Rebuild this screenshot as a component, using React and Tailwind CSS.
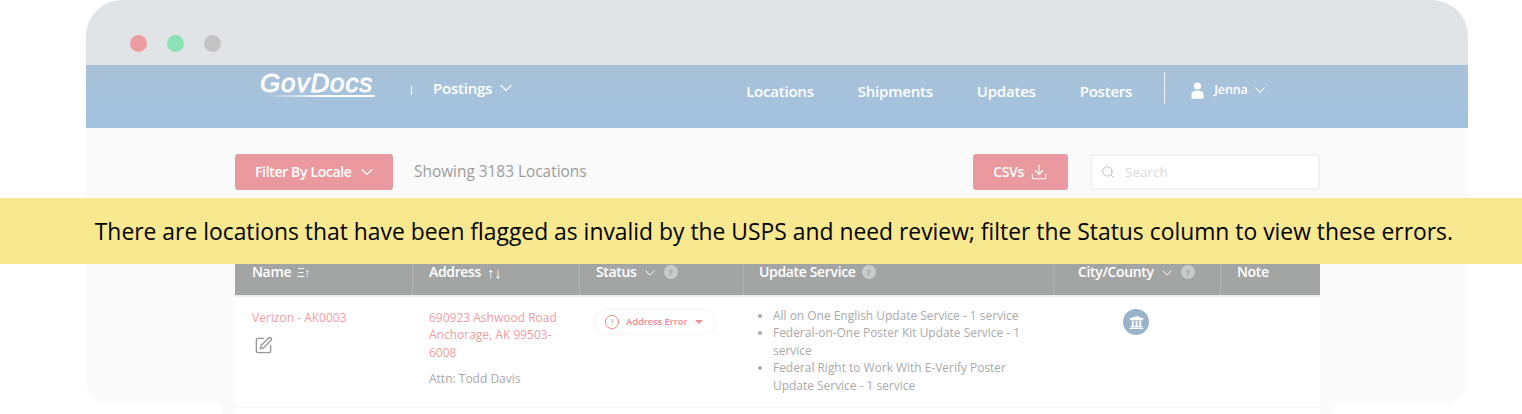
import { ChevronDown, Download, Search, SquarePen, CircleAlert } from 'lucide-react';
import { FaUniversity } from 'react-icons/fa';

const navLinks = ['Locations', 'Shipments', 'Updates', 'Posters'];

const services = [
  'All on One English Update Service - 1 service',
  'Federal-on-One Poster Kit Update Service - 1 service',
  'Federal Right to Work With E-Verify Poster Update Service - 1 service',
];

const HelpDot = () => (
  <span className="ml-[6px] mt-[1px] flex h-[14px] w-[14px] items-center justify-center rounded-full bg-[#c9caca] text-[9px] font-bold leading-none text-[#a3a4a4]">?</span>
);

const Chevron = () => <ChevronDown size={16} strokeWidth={1.5} className="ml-[5px] mt-[1px]" />;

const App = () => {
  return (
    <div className="relative h-[414px] w-[1522px] overflow-hidden bg-white font-['Open_Sans',sans-serif]">
      <div className="ml-[86px] h-[404px] w-[1382px] rounded-t-[36px] rounded-b-[24px] bg-[#fafafa]">
        {/* title bar */}
        <div className="flex h-[65px] items-start gap-[20px] rounded-t-[36px] bg-[#e0e4e7] pl-[44px] pt-[35px]">
          <span className="h-[17px] w-[17px] rounded-full bg-[#ec9d9f]" />
          <span className="h-[17px] w-[17px] rounded-full bg-[#8ae2b5]" />
          <span className="h-[17px] w-[17px] rounded-full bg-[#c4c4c4]" />
        </div>

        {/* nav */}
        <div className="flex h-[63px] bg-gradient-to-b from-[#a9c1d8] to-[#a2c2e0] text-white">
          <div className="ml-[174px] mt-[2px] w-[115px]">
            <div className="font-['Liberation_Sans',sans-serif] text-[26px] italic leading-[32px] tracking-[0.9px] [-webkit-text-stroke:0.8px_white]">GovDocs</div>
            <div className="-mt-[4px] ml-[6px] h-[2px] w-[109px] rounded-full bg-gradient-to-r from-transparent via-white to-white" />
          </div>
          <span className="ml-[36px] mt-[21px] h-[9px] w-[1px] bg-white" />
          <div className="ml-[21px] mt-[11px] flex h-[24px] items-center gap-[4px] text-[15px] font-semibold tracking-[-0.22px]">
            Postings <ChevronDown size={20} strokeWidth={1.3} />
          </div>
          <div className="ml-[230px] mt-[15px] flex h-[24px] gap-[44px] text-[15px] font-semibold tracking-[-0.22px]">
            {navLinks.map((link) => (
              <span key={link}>{link}</span>
            ))}
          </div>
          <span className="ml-[32px] mt-[7px] h-[32px] w-[1px] bg-white/80" />
          <div className="ml-[26px] mt-[14px] flex h-[22px] items-center text-[12.5px] font-semibold tracking-[-0.1px]">
            <svg width="13" height="17" viewBox="0 0 13 17" fill="white">
              <circle cx="6.5" cy="4" r="3.6" />
              <path d="M0.5 16v-3.5C0.5 10 2.5 8.8 4.5 8.8h4c2 0 4 1.2 4 3.7V16c0 .4-.3.7-.7.7H1.2c-.4 0-.7-.3-.7-.7z" />
            </svg>
            <span className="ml-[10px]">Jenna</span>
            <ChevronDown size={18} strokeWidth={1.4} className="ml-[3px]" />
          </div>
        </div>

        {/* toolbar */}
        <div className="ml-[149px] mt-[25px] flex h-[37px] w-[1085px] items-center">
          <button className="flex h-[36px] w-[158px] items-center gap-[5px] rounded-[3px] bg-[#ea9a9e] pl-[20px] text-[14px] font-semibold tracking-[-0.35px] text-white">
            Filter By Locale <ChevronDown size={20} strokeWidth={1.3} />
          </button>
          <span className="ml-[21px] pt-[1px] text-[15.4px] text-[#9c9c9c]">Showing 3183 Locations</span>
          <button className="ml-auto flex h-[36px] w-[95px] items-center justify-center gap-[6px] rounded-[3px] bg-[#ea9a9e] text-[14px] font-semibold tracking-[-0.35px] text-white">
            CSVs <Download size={18} strokeWidth={1.5} />
          </button>
          <div className="ml-[22px] flex h-[36px] w-[230px] items-center gap-[10px] rounded-[3px] border-2 border-[#f1f2f3] bg-white pl-[9px] pt-[1px] text-[13.5px] text-[#d8dadc]">
            <Search size={14} strokeWidth={1.5} className="text-[#b5b5b5]" />
            Search
          </div>
        </div>

        {/* table, its top is hidden under the banner and it runs past the window */}
        <div className="ml-[137px] mt-[68px] w-[1110px] bg-[#fafafa] pl-[12px] pr-[13px]">
          <div className="h-[300px] bg-white">
            <div className="flex h-[37px] bg-[#a3a4a4] text-[14px] font-semibold leading-[16px] tracking-[-0.35px] text-white">
              <div className="flex w-[178px] shrink-0 gap-[6px] border-r border-[#b0b1b1] pl-[17px] pt-[6px]">
                Name <span className="text-[13px] font-normal">Ξ↑</span>
              </div>
              <div className="flex w-[167px] shrink-0 gap-[6px] border-r border-[#b0b1b1] pl-[16px] pt-[6px]">
                Address <span className="text-[15px]">↑↓</span>
              </div>
              <div className="flex w-[164px] shrink-0 border-r border-[#b0b1b1] pl-[16px] pt-[6px]">
                Status <Chevron /> <HelpDot />
              </div>
              <div className="flex w-[310px] shrink-0 border-r border-[#b0b1b1] pl-[15px] pt-[6px]">
                Update Service <HelpDot />
              </div>
              <div className="flex w-[167px] shrink-0 border-r border-[#b0b1b1] pl-[24px] pt-[6px]">
                City/County <Chevron /> <HelpDot />
              </div>
              <div className="pl-[16px] pt-[6px]">Note</div>
            </div>
            <div className="flex h-[113px] border-b-2 border-t-2 border-b-[#f7f7f7] border-t-[#ececec] text-[12px] leading-[17.4px]">
              <div className="w-[178px] shrink-0 pl-[17px] pt-[12px] text-[#ee9ea2]">
                Verizon - AK0003
                <SquarePen size={19} strokeWidth={1.8} className="ml-[2px] mt-[10px] text-[#9a9a9a]" />
              </div>
              <div className="w-[167px] shrink-0 pl-[16px] pr-[16px] pt-[12px]">
                <div className="text-[#ee9ea2]">690923 Ashwood Road Anchorage, AK 99503-6008</div>
                <div className="mt-[9px] text-[#a9a9a9]">Attn: Todd Davis</div>
              </div>
              <div className="w-[164px] shrink-0 pl-[16px] pt-[13px]">
                <span className="flex h-[23px] w-[119px] items-center rounded-full bg-white pl-[8px] text-[9.3px] font-semibold text-[#ec8a8e] shadow-[0_0_4px_rgba(0,0,0,0.08)]">
                  <CircleAlert size={16} strokeWidth={1.5} />
                  <span className="ml-[6px]">Address Error</span>
                  <span className="ml-[8px] h-0 w-0 border-x-[4px] border-t-[4px] border-x-transparent border-t-[#ec8a8e]" />
                </span>
              </div>
              <ul className="w-[310px] shrink-0 list-disc pl-[29px] pr-[24px] pt-[10px] text-[11.95px] text-[#a9a9a9]">
                {services.map((service) => (
                  <li key={service}>{service}</li>
                ))}
              </ul>
              <div className="w-[167px] shrink-0 pl-[69px] pt-[12px]">
                <span className="flex h-[26px] w-[26px] items-center justify-center rounded-full bg-[#98b2cb]">
                  <FaUniversity size={15} className="text-white" />
                </span>
              </div>
            </div>
          </div>
        </div>
      </div>

      {/* yellow notice across the page */}
      <div className="absolute left-0 top-[198px] flex h-[66px] w-full items-center justify-end bg-[#f8e88f] pr-[69px] pt-[2px] text-[22.87px] text-black">
        There are locations that have been flagged as invalid by the USPS and need review; filter the Status column to view these errors.
      </div>
    </div>
  );
};

export default App;
